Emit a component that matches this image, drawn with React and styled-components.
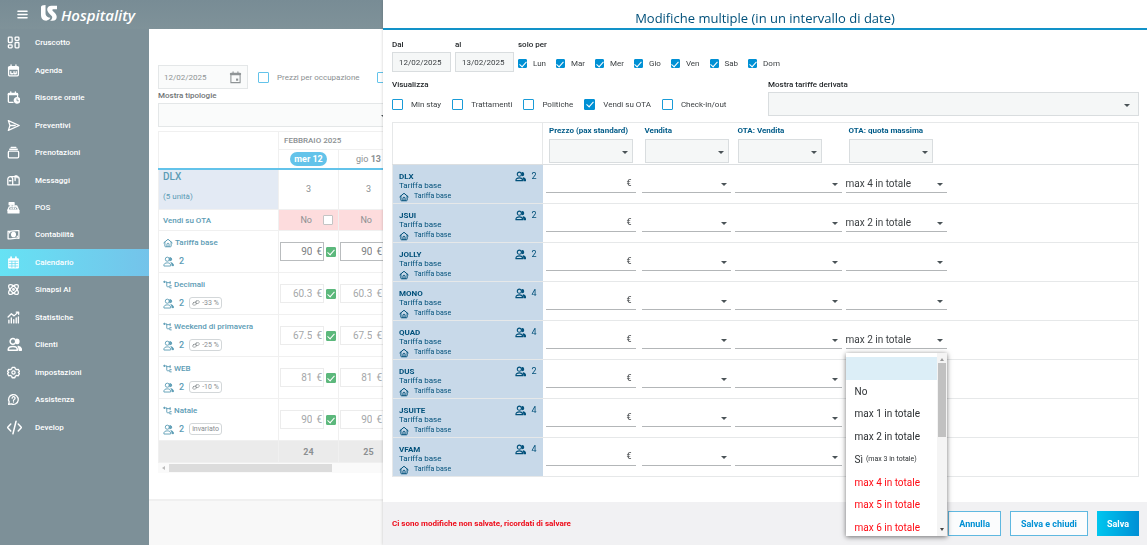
import React, { useState } from "react"
import styled, { createGlobalStyle, css } from "styled-components"

const color = {
  side: "#7d9098",
  brand: "#0090d4",
  ink: "#00507a",
  inkSoft: "#5c9cb5",
  text: "#3b3f42",
  field: "#f5f7f7",
  line: "#e6e8e9",
  rate: "#c8d9e9",
  danger: "#ee0a18",
}

const GlobalStyle = createGlobalStyle`
  * {
    box-sizing: border-box;
  }
  body {
    margin: 0;
    overflow: hidden;
    font-family: Roboto, "Liberation Sans", sans-serif;
    font-size: 8px;
    color: ${color.text};
    background: #fff;
  }
  input, select, button {
    font-family: inherit;
    font-size: inherit;
    color: inherit;
  }
`

/* icons */

const Svg = styled.svg`
  flex: none;
  display: block;
  width: ${(p) => p.$size || 13}px;
  height: ${(p) => p.$size || 13}px;
  fill: none;
  stroke: currentColor;
  stroke-width: ${(p) => p.$stroke || 2};
  stroke-linecap: round;
  stroke-linejoin: round;
`

const shapes = {
  menu: <path d="M2 5h20M2 12h20M2 19h20" />,
  dashboard: (
    <>
      <rect x="2.5" y="2" width="7" height="10" rx="1.5" />
      <rect x="15" y="2" width="7" height="6" rx="1.5" />
      <rect x="2.5" y="16.5" width="7" height="5.5" rx="1.5" />
      <rect x="15" y="12" width="7" height="10" rx="1.5" />
    </>
  ),
  agenda: (
    <>
      <rect x="3" y="5" width="18" height="17" rx="2" />
      <path d="M3 6.5h18M3 9h18" strokeWidth="3" />
      <path d="M7.5 1.5v4M16.5 1.5v4M7 14v4h3.5M13 14v4h4v-4" />
    </>
  ),
  hourly: (
    <>
      <path d="M11 21H4a1.5 1.5 0 0 1-1.5-1.5V6A1.5 1.5 0 0 1 4 4.5h14A1.5 1.5 0 0 1 19.5 6v4" />
      <path d="M3 6h16" strokeWidth="3.5" />
      <path d="M7 1.5v4M15.5 1.5v4" />
      <circle cx="18.5" cy="17.5" r="5" fill="currentColor" />
      <path d="M18.5 14.5v3.5h2.5" stroke={color.side} strokeWidth="1.5" />
    </>
  ),
  send: <path d="M2.5 3l20 9-20 9 3-9zM6 12h9" />,
  box: (
    <>
      <rect x="2.5" y="9.5" width="19" height="12.5" rx="2" />
      <path d="M5 6h14M7.5 2.5h9" strokeWidth="2.5" />
    </>
  ),
  mail: (
    <>
      <path d="M6 5h12a4.5 4.5 0 0 1 4.5 4.5V20h-21V9.5A4.5 4.5 0 0 1 6 5zM6 5a4.5 4.5 0 0 1 4.5 4.5V20" />
      <path d="M15 12V3.5h3.5V7M4.5 12.5h3" />
    </>
  ),
  pos: (
    <>
      <path d="M4 3h9v4H4zM7 7v3M2 17.5h20V22H2z" fill="currentColor" />
      <path d="M4 11h15l2.5 6h-20z" />
      <path d="M7 14h1M11 14h1M15 14h1M12 11V9h6v2" />
    </>
  ),
  cash: (
    <>
      <path d="M2 6c4 1.5 7-2 20-1v14c-8-1.5-14 2-20 1z" />
      <ellipse cx="12" cy="12" rx="3.5" ry="4" fill="currentColor" />
      <path d="M5 9V7.5M19 15v1.5" />
    </>
  ),
  calendar: (
    <>
      <rect x="2" y="4" width="20" height="19" rx="2" fill="currentColor" stroke="none" />
      <path d="M7.5 2v4M16.5 2v4" strokeWidth="3" />
      <path d="M4 9.5h16M4 14h16M4 18.5h16M9 9.5V21M15 9.5V21" stroke="#6cdcf2" strokeWidth="1.5" />
    </>
  ),
  atom: (
    <>
      <path d="M20.2 20.2c2.04-2.03.02-7.36-4.5-11.9-4.54-4.52-9.87-6.54-11.9-4.5-2.04 2.03-.02 7.36 4.5 11.9 4.54 4.52 9.87 6.54 11.9 4.5z" />
      <path d="M15.7 15.7c4.52-4.54 6.54-9.87 4.5-11.9-2.03-2.04-7.36-.02-11.9 4.5-4.52 4.54-6.54 9.87-4.5 11.9 2.03 2.04 7.36.02 11.9-4.5z" />
      <circle cx="12" cy="12" r="1.5" />
    </>
  ),
  stats: (
    <>
      <path d="M2 11l6-6 5 4 8-7M17 2h4.5v4" />
      <path d="M3.5 17v5M8 13v9M12.5 16v6M17 13v9M21 11v11" strokeWidth="2.5" />
    </>
  ),
  people: (
    <>
      <circle cx="9.5" cy="7" r="4.5" />
      <path d="M2 21v-1c0-3.5 3-5 7.5-5s7 1.5 7 5v1z" />
      <path d="M15.5 3.5a3.5 3.5 0 0 1 0 7z" fill="currentColor" />
      <path d="M18 15c3.5.5 5 2.5 5 6h-3.5c0-2.5 0-4-1.5-6z" fill="currentColor" />
    </>
  ),
  gear: (
    <>
      <path d="M9.5 2.5h5l.8 2.8 2.6 1.5 2.9-.7 2.2 4-2 2 2 2-2.2 4-2.9-.7-2.6 1.5-.8 2.8h-5l-.8-2.8-2.6-1.5-2.9.7-2.2-4 2-2-2-2 2.2-4 2.9.7 2.6-1.5z" />
      <circle cx="12" cy="12" r="3" />
    </>
  ),
  help: (
    <>
      <path d="M3 21l1-4.5A9 9 0 1 1 8 20.2z" />
      <path d="M9.5 9.5a2.7 2.7 0 1 1 3.8 2.4c-.9.5-1.3 1-1.3 1.9M12 16.5v.1" />
    </>
  ),
  code: <path d="M6 6.5L.8 12 6 17.5M18 6.5l5.2 5.5-5.2 5.5M14.5 2l-5 20" />,
  home: (
    <>
      <path d="M2 11.5L12 3l10 8.5M4.5 10v9.5A1.5 1.5 0 0 0 6 21h12a1.5 1.5 0 0 0 1.5-1.5V10" />
      <path d="M9.5 20.5V15a2.5 2.5 0 0 1 5 0v5.5" />
    </>
  ),
  branch: <path d="M1 5h9v11a2 2 0 0 0 2 2h3M10 7h9M19 4v6M22 15h-4v6h4M4 3v4" />,
  link: (
    <g transform="rotate(-20 12 12)">
      <rect x="1.5" y="8.5" width="12" height="8" rx="4" />
      <rect x="10.5" y="7" width="12" height="8" rx="4" />
    </g>
  ),
  event: (
    <>
      <path d="M3.5 4h17v17.5h-17zM3.5 7h17" strokeLinecap="butt" />
      <path d="M3.5 5.5h17" strokeWidth="4" />
      <path d="M7.5 1.5v3M16.5 1.5v3" />
      <path d="M13 14h4v4h-4z" fill="currentColor" stroke="none" />
    </>
  ),
}

const Icon = ({ name, size, stroke }) => (
  <Svg viewBox="0 0 24 24" $size={size} $stroke={stroke} aria-hidden="true">
    {shapes[name]}
  </Svg>
)

/* form controls */

const Check = styled.input.attrs({ type: "checkbox" })`
  appearance: none;
  flex: none;
  display: grid;
  place-items: center;
  width: ${(p) => p.$size || 11}px;
  height: ${(p) => p.$size || 11}px;
  margin: 0;
  border: 1px solid ${(p) => p.$line || "#1a9bd7"};
  border-radius: 1px;
  background: #fff;
  &:checked {
    background: ${(p) => p.$fill || color.brand};
    border-color: ${(p) => p.$fill || color.brand};
  }
  &:checked::after {
    content: "";
    width: 3px;
    height: 6px;
    margin-bottom: 2px;
    border: solid #fff;
    border-width: 0 1px 1px 0;
    transform: rotate(42deg);
  }
`
const CheckLabel = styled.label`
  display: flex;
  align-items: center;
  gap: ${(p) => p.$gap || 8}px;
  line-height: 11px;
  white-space: nowrap;
`
const Label = styled.label`
  display: block;
  font-weight: 500;
  line-height: 10px;
  color: #24282b;
  white-space: nowrap;
`
const arrow = css`
  position: relative;
  &::after {
    content: "";
    position: absolute;
    right: ${(p) => p.$right || 4}px;
    top: 50%;
    border: 3px solid transparent;
    border-top-color: #4a5357;
    border-bottom: 0;
    pointer-events: none;
  }
`
const SelectBox = styled.div`
  ${arrow}
  width: ${(p) => p.$width || "100%"};
  height: 24px;
  border: 1px solid #d9dddf;
  background: ${color.field};
`
const LineSelectBox = styled.div`
  ${arrow}
  height: 19px;
  border-bottom: 1px solid #b3b6b8;
`
const NativeSelect = styled.select`
  appearance: none;
  display: block;
  width: 100%;
  height: 100%;
  padding: 0;
  border: 0;
  outline: 0;
  background: transparent;
  font-size: 10px;
`
const DateInput = styled.input`
  display: block;
  width: ${(p) => p.$width}px;
  height: 20px;
  margin-top: 2px;
  padding: 0 6px;
  border: 1px solid #d9dddf;
  background: ${color.field};
`

/* page behind the drawer */

const Page = styled.div`
  display: grid;
  grid-template: 29px 1fr / 149px 1fr;
  height: 100vh;
  overflow: hidden;
`
const TopBar = styled.header`
  grid-column: 1 / -1;
  display: flex;
  align-items: center;
  padding: 0 17px;
  background: linear-gradient(#788c95, #7f9299);
  color: #fff;
`
const MenuButton = styled.button`
  padding: 0;
  margin-right: 13px;
  border: 0;
  background: none;
  color: #fff;
`
const Brand = styled.a`
  display: flex;
  align-items: center;
  gap: 4px;
  color: #fff;
  text-decoration: none;
  font: italic 600 15px/20px "Open Sans", "Noto Sans", sans-serif;
`
const Logo = styled.svg`
  width: 16px;
  height: 16px;
  margin-bottom: 3px;
  fill: #fff;
`
const Sidebar = styled.nav`
  background: ${color.side};
`
const SideList = styled.div`
  display: grid;
  grid-auto-rows: 1fr;
  height: 412px;
`
const SideLink = styled.a`
  display: grid;
  grid-template-columns: 28px 1fr;
  align-items: center;
  padding-left: 7px;
  color: #fff;
  text-decoration: none;
  font-weight: 500;
  background: ${(p) => (p.$active ? "linear-gradient(90deg, #66e2f4, #74c3ea)" : "none")};
`
const Main = styled.main`
  display: flex;
  flex-direction: column;
  min-width: 0;
  overflow: hidden;
  color: #8b9092;
`
const MainBody = styled.div`
  flex: 1;
  min-height: 0;
  padding: 36px 0 0 9px;
`
const MainFoot = styled.footer`
  height: 46px;
  border-top: 2px solid #f0f0f0;
  background: #f8f8f8;
`
const Filters = styled.div`
  display: flex;
  align-items: center;
  gap: 10px;
  label {
    margin-right: 7px;
  }
`
const DateField = styled.div`
  display: flex;
  align-items: center;
  width: 90px;
  height: 24px;
  padding: 0 5px 0 0;
  border: 1px solid #e4e7e8;
  background: #fafbfb;
  color: #8f9496;
  input {
    flex: 1;
    min-width: 0;
    padding: 0 0 0 5px;
    border: 0;
    background: none;
  }
`
const FadedLabel = styled(Label)`
  margin: 2px 0;
  color: #6f7476;
`
const FadedSelect = styled(SelectBox)`
  border-color: #e4e7e8;
  background: #fafbfb;
`
const Calendar = styled.table`
  width: 100%;
  margin-top: 4px;
  table-layout: fixed;
  border-collapse: collapse;
  border: 1px solid #f0f0f0;
  td, th {
    padding: 0;
    border: 1px solid #f0f0f0;
  }
`
const MonthRow = styled.tr`
  height: 18px;
  th {
    padding-left: 5px;
    text-align: left;
    font-weight: 500;
    border-left-color: #e8e8e8;
  }
`
const DayRow = styled.tr`
  height: 19px;
  th {
    font-size: 9px;
    font-weight: 400;
    border-bottom: 2px solid #63c3ea;
  }
`
const DayPill = styled.span`
  display: inline-block;
  padding: 0 4px;
  border-radius: 7px;
  background: ${(p) => (p.$on ? "#63c3ea" : "none")};
  color: ${(p) => (p.$on ? "#fff" : "inherit")};
  font-weight: ${(p) => (p.$on ? 700 : 400)};
  line-height: 14px;
  b {
    font-weight: 700;
  }
`
const RoomCell = styled.th`
  && {
    padding: 2px 4px;
    background: #e3eaf4;
  }
  vertical-align: top;
  text-align: left;
  font-weight: 400;
  color: ${color.inkSoft};
  strong {
    display: block;
    margin-bottom: 10px;
    font-size: 10px;
    font-weight: 500;
    line-height: 10px;
  }
`
const CenterCell = styled.td`
  text-align: center;
  font-size: 9px;
  background: ${(p) => (p.$closed ? "#fddcdd" : "none")};
`
const SellFlag = styled.label`
  display: flex;
  align-items: center;
  justify-content: flex-end;
  gap: 11px;
  padding-right: 5px;
`
const NameCell = styled.th`
  && {
    padding: 0 4px;
  }
  text-align: left;
  font-weight: 500;
  color: ${color.inkSoft};
`
const RateTitle = styled.div`
  display: flex;
  align-items: center;
  gap: 2px;
  height: 14px;
  margin-bottom: 5px;
  white-space: nowrap;
`
const RateMeta = styled.div`
  display: flex;
  align-items: center;
  gap: 5px;
  height: 13px;
  font-size: 9px;
`
const Badge = styled.span`
  display: flex;
  align-items: center;
  gap: 2px;
  height: 12px;
  padding: 0 2px;
  border: 1px solid #d3d7d9;
  border-radius: 3px;
  font-size: 7px;
  font-weight: 400;
  color: #888d90;
`
const PriceCell = styled.td`
  && {
    padding: 0 2px 0 1px;
  }
`
const PriceBox = styled.div`
  display: flex;
  align-items: center;
  gap: 2px;
`
const PriceField = styled.div`
  flex: 1;
  min-width: 0;
  display: flex;
  align-items: center;
  height: 19px;
  padding-right: 1px;
  border: 1px solid ${(p) => (p.$base ? "#b9bcbe" : "#ececec")};
  color: ${(p) => (p.$base ? "#7c8082" : "#a5a8aa")};
  font-size: 10px;
  input {
    flex: 1;
    min-width: 0;
    padding: 0 4px 0 0;
    border: 0;
    background: none;
    text-align: right;
  }
`
const TotalRow = styled.tr`
  height: 22px;
  background: #ebebeb;
  font-weight: 700;
`
const ScrollTrack = styled.div`
  display: flex;
  align-items: center;
  gap: 4px;
  height: 10px;
  padding-left: 4px;
  background: #fafafa;
  &::before {
    content: "";
    border: 2px solid transparent;
    border-left: 0;
    border-right: 3px solid #bbb;
  }
`
const ScrollThumb = styled.div`
  width: 163px;
  height: 8px;
  background: #dcdcdc;
`

/* drawer */

const Drawer = styled.section`
  position: fixed;
  inset: 0 0 0 383px;
  display: flex;
  flex-direction: column;
  background: #fff;
  box-shadow: 0 0 3px rgba(0, 0, 0, 0.2);
`
const Title = styled.h1`
  height: 30px;
  margin: 0;
  padding-top: 8px;
  border-bottom: 2px solid #1292c8;
  text-align: center;
  font: 400 13px/20px "Open Sans", "Noto Sans", sans-serif;
  color: ${color.ink};
`
const DrawerBody = styled.div`
  flex: 1;
  padding: 10px 8px 0 9px;
`
const Period = styled.div`
  display: flex;
  gap: 4px;
`
const Days = styled.div`
  display: flex;
  gap: 10px;
  padding-top: 8px;
`
const Options = styled.div`
  display: grid;
  grid-template-columns: 376px 1fr;
  margin-top: 8px;
`
const Views = styled.div`
  display: flex;
  gap: 11px;
  padding-top: 9px;
`
const DerivedSelect = styled(SelectBox)`
  margin-top: 2px;
`
const Rates = styled.table`
  width: 100%;
  margin-top: 6px;
  table-layout: fixed;
  border-collapse: collapse;
  border: 1px solid ${color.line};
`
const RatesHead = styled.tr`
  height: 42px;
  th {
    padding: 2px 0 0 6px;
    vertical-align: top;
    text-align: left;
    font-weight: 700;
    line-height: 12px;
    color: #005b88;
    border-bottom: 1px solid #dcdfe1;
  }
  th:first-child {
    border-right: 1px solid ${color.line};
  }
  label {
    display: block;
    margin-bottom: 2px;
    white-space: nowrap;
  }
`
const RatesRow = styled.tr`
  height: 38px;
  border-bottom: 1px solid ${color.line};
  td {
    padding: 9px 1px 0 3px;
    vertical-align: top;
  }
`
const RateHead = styled.th`
  padding: 7px 6px 0;
  vertical-align: top;
  text-align: left;
  font-weight: 400;
  line-height: 9px;
  color: ${color.ink};
  background: ${color.rate};
`
const RateTop = styled.div`
  display: flex;
  align-items: center;
  justify-content: space-between;
  height: 9px;
  strong {
    font-weight: 700;
  }
`
const Guests = styled.span`
  display: flex;
  align-items: center;
  gap: 5px;
  font-size: 9px;
`
const RateKind = styled.div`
  display: flex;
  align-items: center;
  gap: 5px;
  height: 13px;
  font-size: 7px;
`
const EuroBox = styled.label`
  display: flex;
  align-items: center;
  height: 19px;
  margin-right: 2px;
  padding-right: 4px;
  border-bottom: 1px solid #b3b6b8;
  font-size: 9px;
  input {
    flex: 1;
    min-width: 0;
    padding: 0;
    border: 0;
    background: none;
  }
`
const QuotaWrap = styled.div`
  position: relative;
  width: 101px;
`
const Menu = styled.div`
  position: absolute;
  z-index: 5;
  top: 23px;
  left: 0;
  display: flex;
  width: 101px;
  height: 183px;
  overflow: hidden;
  background: #fff;
  box-shadow: 0 1px 5px rgba(0, 0, 0, 0.55);
`
const MenuList = styled.ul`
  flex: 1;
  display: grid;
  grid-auto-rows: 1fr;
  height: 182px;
  margin: 4px 0 0;
  padding: 0;
  list-style: none;
`
const MenuItem = styled.li`
  display: flex;
  align-items: center;
  gap: 3px;
  padding-left: 9px;
  font-size: 10px;
  white-space: nowrap;
  color: ${(p) => (p.$over ? "#ff0a14" : "#2c3033")};
  background: ${(p) => (p.$active ? "#dceef7" : "none")};
  small {
    font-size: 7px;
  }
`
const MenuScroll = styled.div`
  display: flex;
  flex-direction: column;
  align-items: center;
  width: 10px;
  padding: 5px 1px;
  background: #f4f4f4;
  &::before, &::after {
    content: "";
    border: 2px solid transparent;
  }
  &::before {
    border-top: 0;
    border-bottom: 3px solid #999;
  }
  &::after {
    margin-top: auto;
    border-bottom: 0;
    border-top: 3px solid #444;
  }
`
const MenuThumb = styled.div`
  width: 100%;
  height: 74px;
  margin-top: 2px;
  background: #c1c1c1;
`
const DrawerFoot = styled.footer`
  display: flex;
  align-items: center;
  gap: 9px;
  height: 43px;
  padding: 0 8px 0 9px;
  background: #f1f1f3;
`
const Warning = styled.p`
  flex: 1;
  margin: 0;
  font-weight: 700;
  color: ${color.danger};
`
const Button = styled.button`
  height: 25px;
  padding: 0 10px;
  border: 1px solid #5fb8e0;
  background: #fbfcfd;
  color: ${color.brand};
  font-size: 9px;
  font-weight: 700;
`
const PrimaryButton = styled(Button)`
  border: 0;
  background: linear-gradient(90deg, #00c6ef, #008fd5);
  color: #fff;
`

const sideItems = [
  ["dashboard", "Cruscotto"],
  ["agenda", "Agenda"],
  ["hourly", "Risorse orarie"],
  ["send", "Preventivi"],
  ["box", "Prenotazioni"],
  ["mail", "Messaggi"],
  ["pos", "POS"],
  ["cash", "Contabilità"],
  ["calendar", "Calendario"],
  ["atom", "Sinapsi AI"],
  ["stats", "Statistiche"],
  ["people", "Clienti"],
  ["gear", "Impostazioni"],
  ["help", "Assistenza"],
  ["code", "Develop"],
]

const calendarRates = [
  { name: "Tariffa base", price: "90", base: true },
  { name: "Decimali", price: "60.3", badge: "-33 %" },
  { name: "Weekend di primavera", price: "67.5", badge: "-25 %" },
  { name: "WEB", price: "81", badge: "-10 %" },
  { name: "Natale", price: "90", badge: "invariato" },
]

const weekDays = ["Lun", "Mar", "Mer", "Gio", "Ven", "Sab", "Dom"]
const views = ["Min stay", "Trattamenti", "Politiche", "Vendi su OTA", "Check-in/out"]
const columns = ["Prezzo (pax standard)", "Vendita", "OTA: Vendita", "OTA: quota massima"]

const rooms = [
  { code: "DLX", pax: 2, quota: "max 4 in totale" },
  { code: "JSUI", pax: 2, quota: "max 2 in totale" },
  { code: "JOLLY", pax: 2 },
  { code: "MONO", pax: 4 },
  { code: "QUAD", pax: 4, quota: "max 2 in totale", open: true },
  { code: "DUS", pax: 2 },
  { code: "JSUITE", pax: 4 },
  { code: "VFAM", pax: 4 },
]

const quotaOptions = [
  { text: "" },
  { text: "No" },
  { text: "max 1 in totale" },
  { text: "max 2 in totale" },
  { text: "Sì", note: "(max 3 in totale)" },
  { text: "max 4 in totale", over: true },
  { text: "max 5 in totale", over: true },
  { text: "max 6 in totale", over: true },
]

const Header = () => (
  <TopBar>
    <MenuButton aria-label="Menu">
      <Icon name="menu" size={11} stroke={3} />
    </MenuButton>
    <Brand href="#">
      <Logo viewBox="0 0 46 46" aria-hidden="true">
        <path d="M0 6C0 2 4 0 13 0v24c0 6 3 10 9 12l5 1c-3 5-7 8-12 8C5 45 0 38 0 28z" />
        <path d="M46 2v10H35c-3 0-3 3-1 5l6 6c9 9 6 22-7 22h-7c5-3 7-7 6-11-1-3-4-5-7-8C13 15 17 2 30 2z" />
      </Logo>
      Hospitality
    </Brand>
  </TopBar>
)

const Side = () => (
  <Sidebar>
    <SideList>
      {sideItems.map(([icon, text]) => (
        <SideLink key={icon} href="#" $active={icon === "calendar"}>
          <Icon name={icon} size={icon === "people" || icon === "code" ? 15 : 13} stroke={2.4} />
          {text}
        </SideLink>
      ))}
    </SideList>
  </Sidebar>
)

const Price = ({ rate, day }) => (
  <PriceCell>
    <PriceBox>
      <PriceField $base={rate.base}>
        <input defaultValue={rate.price} aria-label={`${rate.name} ${day}`} />€
      </PriceField>
      <Check $size={10} $fill="#5cb87c" defaultChecked aria-label={`Aperta ${rate.name} ${day}`} />
    </PriceBox>
  </PriceCell>
)

const CalendarView = () => (
  <Main>
    <MainBody>
      <Filters>
        <DateField>
          <input defaultValue="12/02/2025" aria-label="Data" />
          <Icon name="event" size={13} />
        </DateField>
        <CheckLabel>
          <Check $line="#63c3ea" />
          Prezzi per occupazione
        </CheckLabel>
        <Check $line="#63c3ea" aria-label="Altro filtro" />
      </Filters>
      <FadedLabel htmlFor="types">Mostra tipologie</FadedLabel>
      <FadedSelect $width="234px">
        <NativeSelect id="types" />
      </FadedSelect>
      <Calendar>
        <colgroup>
          <col style={{ width: 120 }} />
          <col style={{ width: 60 }} />
          <col style={{ width: 60 }} />
          <col />
        </colgroup>
        <thead>
          <MonthRow>
            <td rowSpan={2} style={{ borderBottom: "2px solid #63c3ea" }} />
            <th colSpan={3}>FEBBRAIO 2025</th>
          </MonthRow>
          <DayRow>
            <th>
              <DayPill $on>
                mer <b>12</b>
              </DayPill>
            </th>
            <th>
              <DayPill>
                gio <b>13</b>
              </DayPill>
            </th>
            <th />
          </DayRow>
        </thead>
        <tbody>
          <tr style={{ height: 41 }}>
            <RoomCell>
              <strong>DLX</strong>(5 unità)
            </RoomCell>
            <CenterCell>3</CenterCell>
            <CenterCell>3</CenterCell>
            <CenterCell />
          </tr>
          <tr style={{ height: 21 }}>
            <NameCell>Vendi su OTA</NameCell>
            {["12", "13"].map((day) => (
              <CenterCell $closed key={day}>
                <SellFlag>
                  No
                  <Check $size={10} $line="#c4c4c4" />
                </SellFlag>
              </CenterCell>
            ))}
            <CenterCell $closed />
          </tr>
          {calendarRates.map((rate) => (
            <tr key={rate.name} style={{ height: 42 }}>
              <NameCell>
                <RateTitle>
                  <Icon name={rate.base ? "home" : "branch"} size={rate.base ? 10 : 9} stroke={2.4} />
                  {rate.name}
                </RateTitle>
                <RateMeta>
                  <Icon name="people" size={11} />
                  2
                  {rate.badge && (
                    <Badge>
                      {rate.badge !== "invariato" && <Icon name="link" size={8} />}
                      {rate.badge}
                    </Badge>
                  )}
                </RateMeta>
              </NameCell>
              <Price rate={rate} day="12" />
              <Price rate={rate} day="13" />
              <td />
            </tr>
          ))}
          <TotalRow>
            <td />
            <CenterCell>24</CenterCell>
            <CenterCell>25</CenterCell>
            <td />
          </TotalRow>
        </tbody>
      </Calendar>
      <ScrollTrack>
        <ScrollThumb />
      </ScrollTrack>
    </MainBody>
    <MainFoot />
  </Main>
)

const QuotaMenu = () => (
  <Menu>
    <MenuList role="listbox" aria-label="OTA: quota massima">
      {quotaOptions.map((option, i) => (
        <MenuItem key={i} role="option" aria-selected={i === 0} $active={i === 0} $over={option.over}>
          {option.text}
          {option.note && <small>{option.note}</small>}
        </MenuItem>
      ))}
    </MenuList>
    <MenuScroll>
      <MenuThumb />
    </MenuScroll>
  </Menu>
)

const RoomRow = ({ room }) => (
  <RatesRow>
    <RateHead scope="row">
      <RateTop>
        <strong>{room.code}</strong>
        <Guests>
          <Icon name="people" size={11} stroke={2.4} />
          {room.pax}
        </Guests>
      </RateTop>
      Tariffa base
      <RateKind>
        <Icon name="home" size={10} stroke={2.4} />
        Tariffa base
      </RateKind>
    </RateHead>
    <td>
      <EuroBox>
        <input aria-label={`${room.code} prezzo`} />€
      </EuroBox>
    </td>
    <td>
      <LineSelectBox>
        <NativeSelect aria-label={`${room.code} vendita`} />
      </LineSelectBox>
    </td>
    <td>
      <LineSelectBox>
        <NativeSelect aria-label={`${room.code} OTA vendita`} />
      </LineSelectBox>
    </td>
    <td>
      <QuotaWrap>
        <LineSelectBox>
          <NativeSelect aria-label={`${room.code} quota massima`}>
            <option>{room.quota || ""}</option>
          </NativeSelect>
        </LineSelectBox>
        {room.open && <QuotaMenu />}
      </QuotaWrap>
    </td>
  </RatesRow>
)

const BulkEdit = () => {
  const [shown, setShown] = useState(["Vendi su OTA"])
  const toggle = (view) =>
    setShown(shown.includes(view) ? shown.filter((v) => v !== view) : [...shown, view])

  return (
    <Drawer>
      <Title>Modifiche multiple (in un intervallo di date)</Title>
      <DrawerBody>
        <Period>
          <div>
            <Label htmlFor="from">Dal</Label>
            <DateInput id="from" $width={59} defaultValue="12/02/2025" />
          </div>
          <div>
            <Label htmlFor="to">al</Label>
            <DateInput id="to" $width={59} defaultValue="13/02/2025" />
          </div>
          <div>
            <Label as="span">solo per</Label>
            <Days>
              {weekDays.map((day) => (
                <CheckLabel key={day} $gap={6}>
                  <Check $size={9} defaultChecked />
                  {day}
                </CheckLabel>
              ))}
            </Days>
          </div>
        </Period>
        <Options>
          <div>
            <Label as="span">Visualizza</Label>
            <Views>
              {views.map((view) => (
                <CheckLabel key={view}>
                  <Check checked={shown.includes(view)} onChange={() => toggle(view)} />
                  {view}
                </CheckLabel>
              ))}
            </Views>
          </div>
          <div>
            <Label htmlFor="derived">Mostra tariffe derivata</Label>
            <DerivedSelect $right={8}>
              <NativeSelect id="derived" />
            </DerivedSelect>
          </div>
        </Options>
        <Rates>
          <colgroup>
            <col style={{ width: 150 }} />
            <col style={{ width: 96 }} />
            <col style={{ width: 93 }} />
            <col style={{ width: 111 }} />
            <col />
          </colgroup>
          <thead>
            <RatesHead>
              <th />
              {columns.map((column, i) => (
                <th key={column}>
                  <label htmlFor={`col-${i}`}>{column}</label>
                  <SelectBox $width="84px">
                    <NativeSelect id={`col-${i}`} />
                  </SelectBox>
                </th>
              ))}
            </RatesHead>
          </thead>
          <tbody>
            {rooms.map((room) => (
              <RoomRow key={room.code} room={room} />
            ))}
          </tbody>
        </Rates>
      </DrawerBody>
      <DrawerFoot>
        <Warning>Ci sono modifiche non salvate, ricordati di salvare</Warning>
        <Button>Annulla</Button>
        <Button>Salva e chiudi</Button>
        <PrimaryButton>Salva</PrimaryButton>
      </DrawerFoot>
    </Drawer>
  )
}

const App = () => (
  <>
    <GlobalStyle />
    <Page>
      <Header />
      <Side />
      <CalendarView />
    </Page>
    <BulkEdit />
  </>
)

export default App
